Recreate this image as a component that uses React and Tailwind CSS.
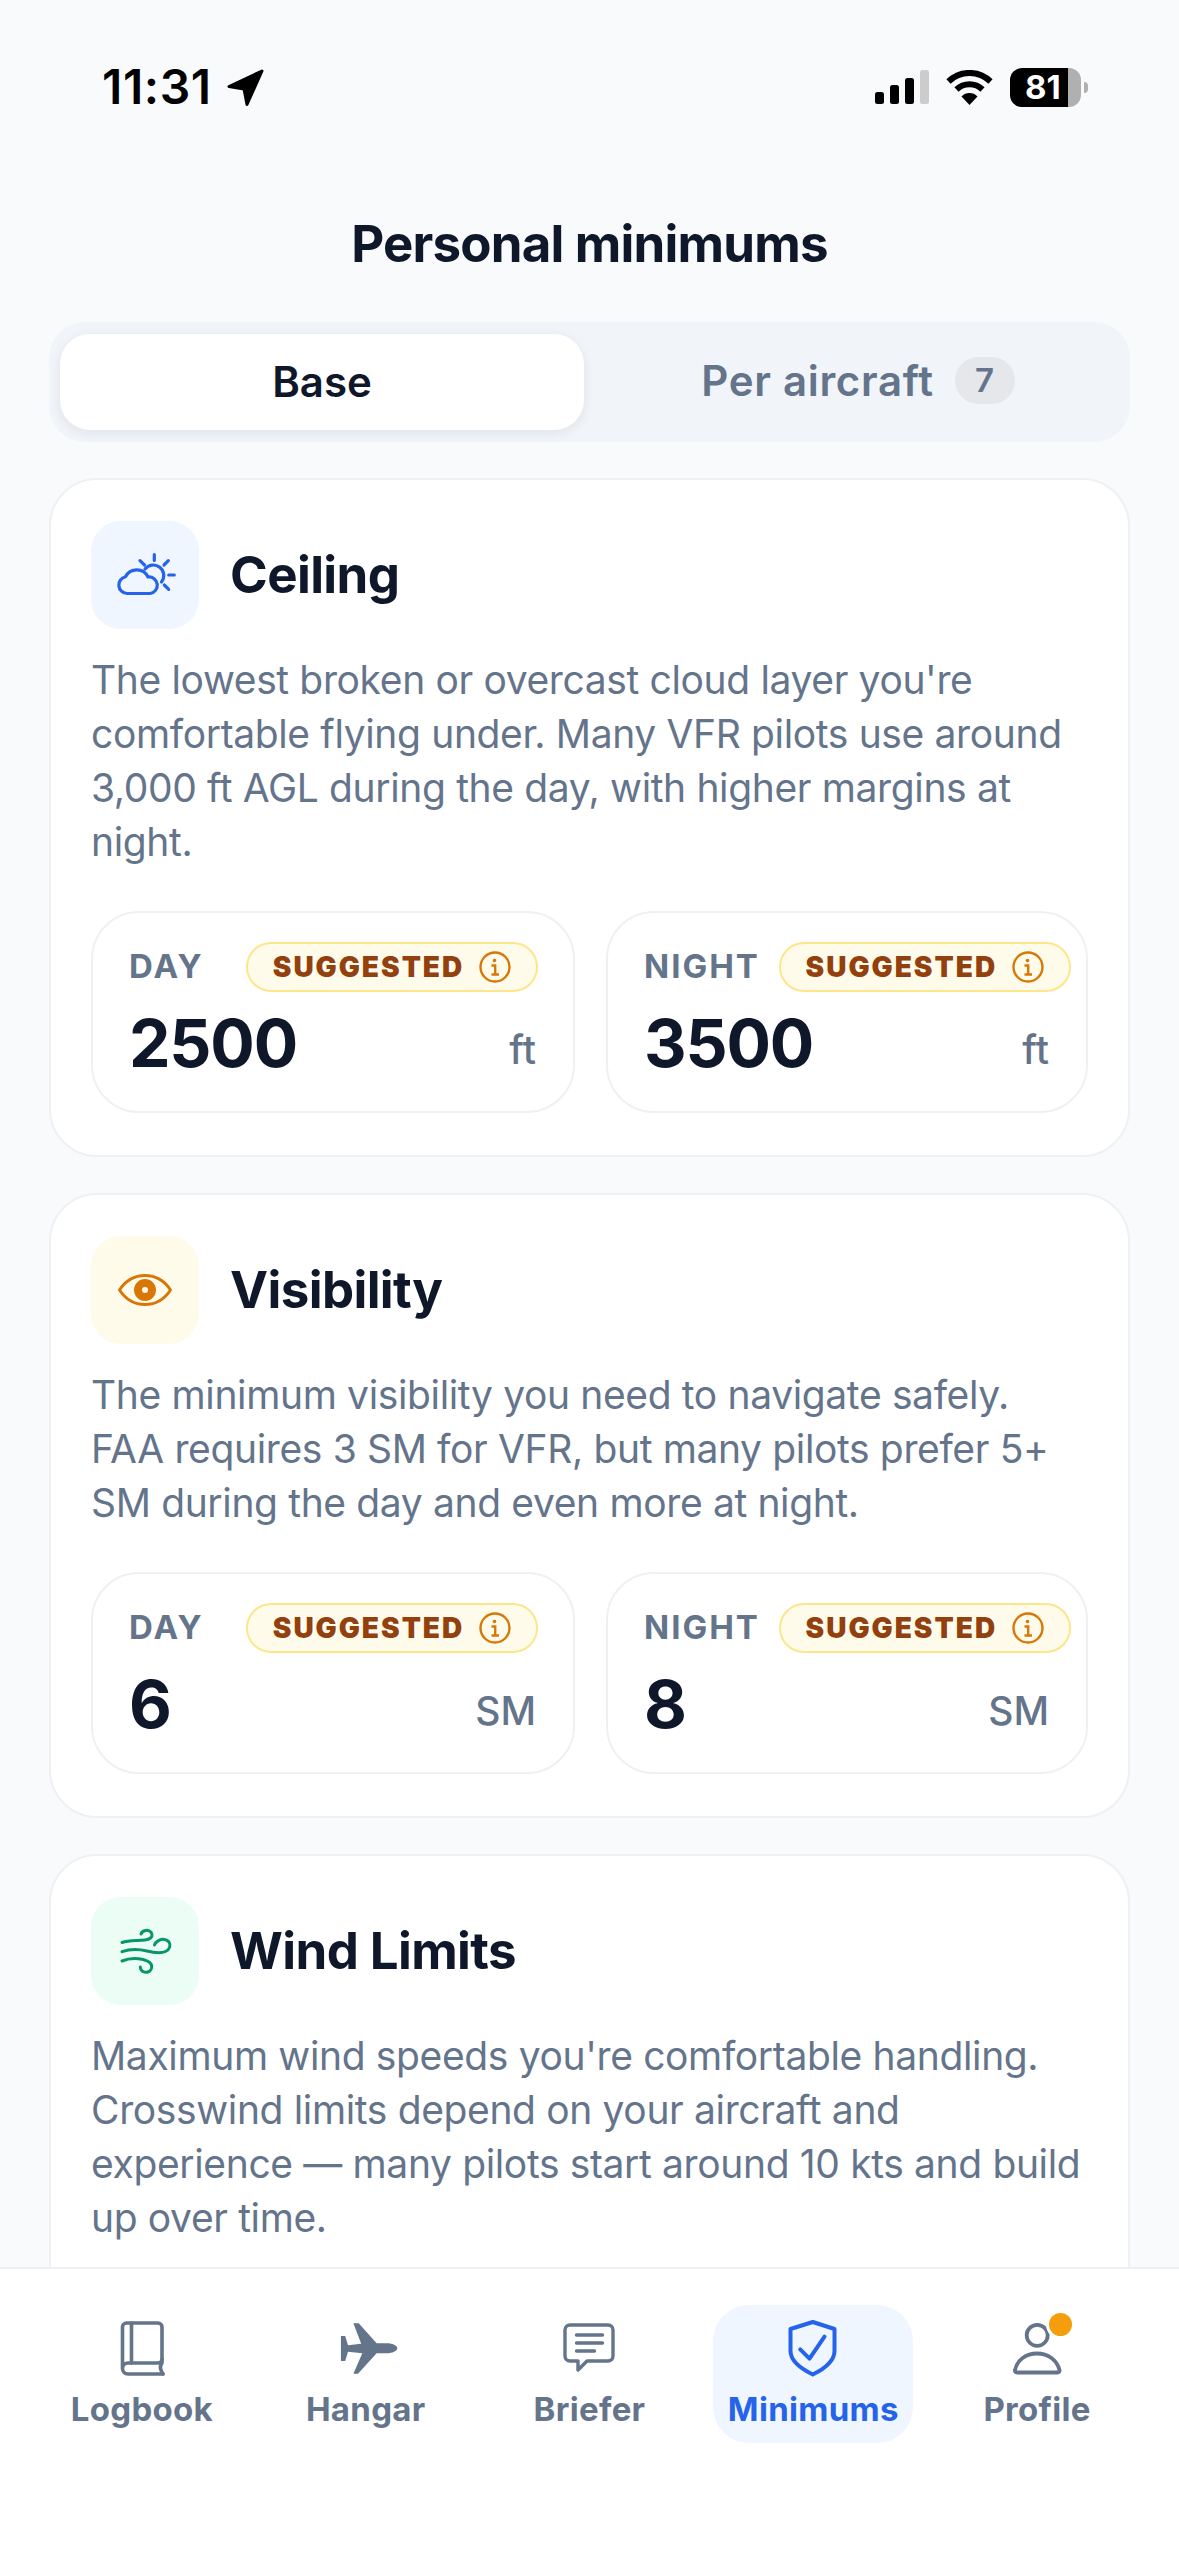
const SignalIcon = () => (
  <svg width="54" height="34" viewBox="0 0 54 34">
    <rect x="0" y="22" width="9" height="12" rx="2.5" fill="#000" />
    <rect x="15" y="15" width="9" height="19" rx="2.5" fill="#000" />
    <rect x="30" y="8" width="9" height="26" rx="2.5" fill="#000" />
    <rect x="45" y="0" width="9" height="34" rx="2.5" fill="#ccc" />
  </svg>
)

const WifiIcon = () => (
  <svg width="47" height="35" viewBox="0 0 47 35" fill="none" stroke="#000" strokeWidth="6">
    <path d="M2.5 11.5A30 30 0 0 1 44.500 11.500" />
    <path d="M10.500 19.500A18.500 18.500 0 0 1 36.500 19.500" />
    <path d="M23.500 35L15.500 26.500A11 11 0 0 1 31.500 26.500Z" fill="#000" stroke="none" />
  </svg>
)

const LocationIcon = () => (
  <svg width="37" height="37" viewBox="0 0 37 37" fill="#000" stroke="#000" strokeWidth="3" strokeLinejoin="round">
    <path d="M35 2L2 17.500L17 20L20 35.500Z" />
  </svg>
)

const InfoIcon = () => (
  <svg width="32" height="32" viewBox="0 0 32 32" fill="none" stroke="#d97706" strokeWidth="2.400">
    <circle cx="16" cy="16" r="14.500" />
    <circle cx="15.500" cy="9.500" r="1.800" fill="#d97706" stroke="none" />
    <path d="M12.500 14.500H16.200V23.500M12.500 23.500H20" />
  </svg>
)

const CloudSunIcon = () => (
  <svg width="108" height="108" viewBox="0 0 108 108" fill="none" stroke="#2563eb" strokeWidth="3.200" strokeLinecap="round" strokeLinejoin="round">
    <path d="M36 72.500a8.500 8.500 0 0 1-1.500-16.800A12.500 12.500 0 0 1 57 56a8.300 8.300 0 0 1 2 16.500Z" />
    <path d="M54 48A10 10 0 0 1 70.500 61" />
    <path d="M63.300 33.500V39.500M49 39.700L53.500 44M77.300 39.700L73 44M77.700 54H83.300M73.300 64L77.700 68.300" />
  </svg>
)

const EyeIcon = () => (
  <svg width="108" height="108" viewBox="0 0 108 108" fill="none" stroke="#d97706" strokeWidth="3">
    <path d="M28.500 54C35 44 43 39.500 54 39.500S73 44 79.500 54C73 64 65 68.500 54 68.500S35 64 28.500 54Z" strokeLinejoin="round" />
    <circle cx="54" cy="54" r="7" strokeWidth="8" />
  </svg>
)

const WindIcon = () => (
  <svg width="108" height="108" viewBox="0 0 108 108" fill="none" stroke="#059669" strokeWidth="3" strokeLinecap="round">
    <path d="M31 45.500C38 43 47 44 54 43C59 42.500 61.500 40 61 37.500C60.500 34 57 33 54.500 33.500C52 34 50.500 35.500 50 37" />
    <path d="M31 54.700C40 51.500 48 52 56 54C63 55.800 70 56.500 74.500 54.500C79 52.500 80 48 78 45C76 42.500 71.500 41.500 68 43.300C65.500 44.500 64 46 63.500 48" />
    <path d="M31 64C38 61 46 61 52 62.500C57 63.700 60.500 65.500 60.700 69.500C61 73 58 75.500 54.500 75.300C51.500 75 49.500 73 49.300 70" />
  </svg>
)

const BookIcon = () => (
  <svg width="66" height="66" viewBox="0 0 66 66" fill="none" stroke="currentColor" strokeWidth="3.600" strokeLinejoin="round" strokeLinecap="round">
    <path d="M13.500 54V12a4 4 0 0 1 4-4H49a4 4 0 0 1 4 4V44a4 4 0 0 1-4 4H19a5.500 5.500 0 0 0 0 11H54" />
    <path d="M22.500 8V48M53 44V48C50.500 51 50.500 54 54 59" />
  </svg>
)

const PlaneIcon = () => (
  <svg width="66" height="66" viewBox="0 0 66 66" fill="currentColor">
    <path d="M64.300 33.300C64.300 30.500 59 28.300 54.300 28.300H43.600L25.700 8.300H20.400L28.200 28.700L15 30.300L12.200 21H7.900V46H12.200L15 36.700L29.300 38.300L20.400 58.700H25L43.600 38.300H54.300C59 38.300 64.300 36 64.300 33.300Z" />
  </svg>
)

const ChatIcon = () => (
  <svg width="66" height="66" viewBox="0 0 66 66" fill="none" stroke="currentColor" strokeWidth="3.400" strokeLinejoin="round" strokeLinecap="round">
    <path d="M14 10H52a5 5 0 0 1 5 5V41a5 5 0 0 1-5 5H31L22 55V46H14a5 5 0 0 1-5-5V15a5 5 0 0 1 5-5Z" />
    <path d="M20.500 20H46.500M20.500 28H46.500M20.500 36H38.500" />
  </svg>
)

const ShieldIcon = () => (
  <svg width="66" height="66" viewBox="0 0 66 66" fill="none" stroke="currentColor" strokeWidth="4" strokeLinejoin="round" strokeLinecap="round">
    <path d="M32.800 7L54.500 14V36C54.500 46 44 54 32.800 59.500C21.500 54 10.500 46 10.500 36V14Z" />
    <path d="M20.200 34.300L29.500 43.700L44.500 21.700" />
  </svg>
)

const UserIcon = () => (
  <svg width="66" height="66" viewBox="0 0 66 66" fill="none" stroke="currentColor" strokeWidth="3.800" strokeLinejoin="round">
    <circle cx="33.200" cy="20.300" r="10.500" />
    <path d="M13 57.500a2 2 0 0 1-2-2.500C13 45 22 38.500 33 38.500S53 45 55.500 55a2 2 0 0 1-2 2.500Z" />
  </svg>
)

function StatusBar() {
  return (
    <div className="flex h-[176px] items-start justify-between pt-[64px] pl-[102px] pr-[91px]">
      <div className="flex items-center gap-[15px] h-[46px]">
        <span className="text-[48px] leading-none font-semibold tracking-[0.6px] text-black">11:31</span>
        <LocationIcon />
      </div>
      <div className="flex items-center h-[46px]">
        <SignalIcon />
        <div className="ml-[17px]"><WifiIcon /></div>
        <div className="ml-[17px] w-[71px] h-[39px] rounded-[12px] overflow-hidden bg-[linear-gradient(90deg,#000_82%,#b0b0b0_82%)] flex items-center pl-[15px]">
          <span className="text-[33px] leading-none font-bold text-white">81</span>
        </div>
        <div className="ml-[3px] w-[4px] h-[11px] rounded-r-full bg-[#b0b0b0]" />
      </div>
    </div>
  )
}

function Segmented() {
  return (
    <div className="mx-[49px] h-[120px] py-[12px] pl-[11px] pr-[12px] rounded-[36px] bg-[#f1f5f9] flex">
      <div className="w-[524px] pb-[2px] rounded-[30px] bg-white shadow-[0_3px_12px_rgba(15,23,42,0.08)] flex items-center justify-center text-[42px] font-semibold text-[#0f172a]">
        Base
      </div>
      <div className="flex-1 pl-[14px] pb-[3px] flex items-center justify-center gap-[21px] text-[42px] font-semibold tracking-[0.7px] text-[#64748b]">
        Per aircraft
        <span className="w-[60px] h-[47px] rounded-full bg-[#e5e7eb] flex items-center justify-center text-[33px] font-semibold">7</span>
      </div>
    </div>
  )
}

function ValueBox({ label, value, unit }) {
  return (
    <div className="h-[202px] rounded-[48px] border-2 border-[#eef0f4] bg-white pt-[29px] pl-[36px] pr-[35px]">
      <div className="flex items-center justify-between gap-[19px] h-[50px]">
        <span className="text-[33px] font-bold tracking-[2px] text-[#64748b]">{label}</span>
        <span className="shrink-0 w-[292px] h-[50px] rounded-full border-2 border-[#fde68a] bg-[#fffbeb] flex items-center justify-center gap-[15px]">
          <span className="text-[28px] font-black tracking-[2px] text-[#92400e]">SUGGESTED</span>
          <InfoIcon />
        </span>
      </div>
      <div className="mt-[12px] flex items-center justify-between pr-[2px]">
        <span className="text-[66px] leading-[78px] font-bold tracking-[-1.2px] text-[#0f172a]">{value}</span>
        <span className="text-[39px] font-medium text-[#64748b] mt-[14px]">{unit}</span>
      </div>
    </div>
  )
}

function Card({ icon, iconBg, title, text, day, night, unit }) {
  return (
    <div className="mx-[49px] mb-[36px] rounded-[48px] border-2 border-[#eef0f4] bg-white px-[40px] pt-[41px] pb-[42px]">
      <div className="flex items-center gap-[31px]">
        <div className={`w-[108px] h-[108px] rounded-[30px] ${iconBg}`}>{icon}</div>
        <h2 className="text-[51px] font-bold tracking-[-0.6px] text-[#0f172a]">{title}</h2>
      </div>
      <p className="mt-[24px] text-[39px] leading-[54px] tracking-[-0.36px] text-[#64748b]">{text}</p>
      {day ? (
        <div className="mt-[42px] grid grid-cols-[484px_482px] gap-[31px]">
          <ValueBox label="DAY" value={day} unit={unit} />
          <ValueBox label="NIGHT" value={night} unit={unit} />
        </div>
      ) : (
        <div className="h-[244px]" />
      )}
    </div>
  )
}

function NavItem({ icon, label, active, dot }) {
  return (
    <div className={`mx-auto w-[200px] h-[138px] rounded-[36px] flex flex-col items-center pt-[10px] ${active ? 'bg-[#eff6ff] text-[#2563eb]' : 'text-[#64748b]'}`}>
      <div className="relative w-[66px] h-[66px]">
        {icon}
        {dot && <span className="absolute left-[45px] top-[-2px] w-[23px] h-[23px] rounded-full bg-[#f59e0b] ring-[3px] ring-white" />}
      </div>
      <span className="mt-[8px] text-[33px] leading-[40px] font-bold tracking-[0.3px]">{label}</span>
    </div>
  )
}

export default function App() {
  return (
    <div className="w-[1179px] h-[2556px] overflow-hidden flex flex-col bg-[#f8fafc] font-['Inter',sans-serif]">
      <StatusBar />
      <h1 className="h-[146px] pt-[35px] text-center text-[51px] leading-[66px] font-bold tracking-[-0.8px] text-[#0f172a]">Personal minimums</h1>
      <Segmented />
      <main className="flex-1 overflow-hidden pt-[36px]">
        <Card
          icon={<CloudSunIcon />}
          iconBg="bg-[#eff6ff]"
          title="Ceiling"
          text="The lowest broken or overcast cloud layer you're comfortable flying under. Many VFR pilots use around 3,000 ft AGL during the day, with higher margins at night."
          day="2500"
          night="3500"
          unit="ft"
        />
        <Card
          icon={<EyeIcon />}
          iconBg="bg-[#fffbeb]"
          title="Visibility"
          text="The minimum visibility you need to navigate safely. FAA requires 3 SM for VFR, but many pilots prefer 5+ SM during the day and even more at night."
          day="6"
          night="8"
          unit="SM"
        />
        <Card
          icon={<WindIcon />}
          iconBg="bg-[#ecfdf5]"
          title="Wind Limits"
          text="Maximum wind speeds you're comfortable handling. Crosswind limits depend on your aircraft and experience — many pilots start around 10 kts and build up over time."
        />
      </main>
      <nav className="h-[289px] shrink-0 border-t-2 border-[#eceff3] bg-white grid grid-cols-5 px-[30px] pt-[36px]">
        <NavItem icon={<BookIcon />} label="Logbook" />
        <NavItem icon={<PlaneIcon />} label="Hangar" />
        <NavItem icon={<ChatIcon />} label="Briefer" />
        <NavItem icon={<ShieldIcon />} label="Minimums" active />
        <NavItem icon={<UserIcon />} label="Profile" dot />
      </nav>
    </div>
  )
}
